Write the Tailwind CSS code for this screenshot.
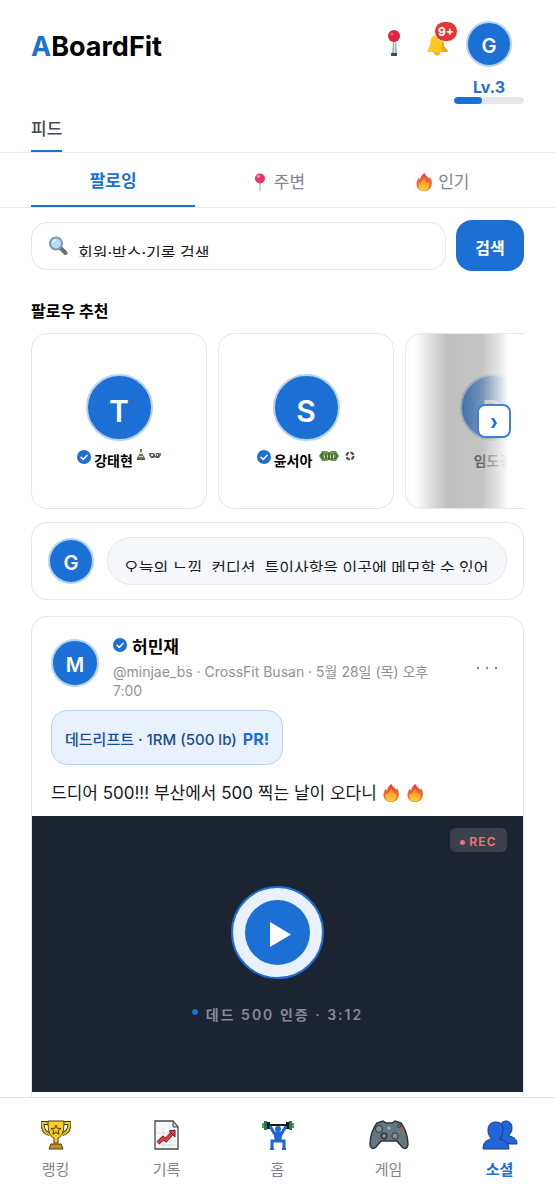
<!DOCTYPE html>
<html lang="ko">

<head>
	<meta charset="UTF-8" />
	<meta name="viewport" content="width=device-width, initial-scale=1.0" />
	<title>ABoardFit</title>
	<script src="https://cdn.jsdelivr.net/npm/@tailwindcss/browser@4"></script>
</head>

<body class="bg-white font-['Inter','Noto_Sans_CJK_KR',sans-serif] text-black">
	<!-- Shared icons -->
	<svg class="absolute size-0" aria-hidden="true">
		<linearGradient id="flame-outer" x1="0" y1="0" x2="0" y2="1">
			<stop offset="0" stop-color="#e8403a" />
			<stop offset="1" stop-color="#fb8c2a" />
		</linearGradient>
		<linearGradient id="flame-inner" x1="0" y1="0" x2="0" y2="1">
			<stop offset="0" stop-color="#fb8a20" />
			<stop offset="1" stop-color="#ffd33c" />
		</linearGradient>
		<symbol id="flame" viewBox="0 0 18 20">
			<path fill="url(#flame-outer)" d="M9.500 1c1 3 4 4 5 6 .3-.6.5-1.200.4-2 1.800 2.500 2.300 5.500 1.800 8-.8 4-3.700 6-7.700 6s-7-2.200-7.500-6c-.4-3 1-5.500 2.500-7.500.1 1 .4 1.800 1 2.500C5.500 5 7 2.500 9.500 1z" />
			<path fill="url(#flame-inner)" d="M10 6c-.3 2.500 1.500 3.500 2.300 5 .5-.4.800-1 .9-1.600 1.300 2.200 1.500 4.600.3 6.600-1 1.700-2.600 2.500-4.500 2.500-2.800 0-5-1.500-5.400-4-.3-1.800.4-3.300 1.200-4.300.2.700.5 1.200 1 1.600C6 9.500 7.500 7.300 10 6z" />
		</symbol>
		<symbol id="verified" viewBox="0 0 14 14">
			<circle cx="7" cy="7" r="7" fill="#1c6fd4" />
			<path d="M4 7.200l2.200 2.200 3.900-4.200" fill="none" stroke="#fff" stroke-width="1.500" stroke-linecap="round" stroke-linejoin="round" />
		</symbol>
	</svg>

	<header class="border-b border-[#e8e9ec] px-[31px]">
		<div class="flex items-start justify-between pt-[21px]">
			<h1 class="pt-1 text-[27px] leading-[44px] font-bold"><span class="text-[#1c6fd4]">A</span>BoardFit</h1>
			<div class="flex items-start">
				<button type="button" aria-label="위치" class="mt-2 mr-6">
					<svg class="h-7 w-4" viewBox="0 0 16 28">
						<path d="M7 12h3l1 13H6z" fill="#9eb2bf" />
						<path d="M8 12h1v13H8z" fill="#dce6ec" />
						<path d="M5 24h6v3H5z" fill="#444b50" />
						<circle cx="8" cy="7" r="6" fill="#dd2443" />
						<circle cx="6" cy="5" r="1.500" fill="#ef5a70" />
					</svg>
				</button>
				<button type="button" aria-label="알림" class="relative mt-3">
					<svg class="h-6 w-6" viewBox="0 0 24 24">
						<path d="M11 1.500c4.500.5 6.500 4 6.500 8.500 0 3.500 1.500 4.500 4 7.500.5.800-.2 1.500-1 1.500h-17c-1 0-2.500-.5-2-1.500C3 14.500 4 12.500 4.500 9 5 4.500 7 2 11 1.500z" fill="#fdca22" />
						<path d="M13 2c3 1.500 4.500 4.500 4.500 8 0 3.500 1.500 4.500 4 7.500.5.800-.2 1.500-1 1.500h-5c1-5 .500-12-2.500-17z" fill="#e5a91b" />
						<path d="M7.500 19h7c-.5 2.500-1.800 3.500-3.500 3.500S8 21.500 7.500 19z" fill="#f2b61f" />
					</svg>
					<span class="absolute -top-3 left-2 flex h-[21px] w-6 items-center justify-center rounded-full border border-white bg-[#e23633] text-xs font-bold text-white">9+</span>
				</button>
				<div class="ml-1 flex w-[70px] flex-col items-center">
					<div class="flex size-[46px] items-center justify-center rounded-full border-2 border-[#b5d2f5] bg-[#1c6fd4] pt-1 text-xl font-semibold text-white">G</div>
					<span class="mt-2 text-base leading-6 font-bold text-[#1c6fd4]">Lv.3</span>
					<div class="-mt-0.5 h-[7px] w-full overflow-hidden rounded-full bg-[#e5e6ea]">
						<div class="h-full rounded-full bg-[#1c6fd4]" style="width: 40%"></div>
					</div>
				</div>
			</div>
		</div>
		<a href="#feed" class="mt-[10px] inline-block border-b-2 border-[#1c6fd4] pt-[3px] pb-[9px] align-top text-[17px] leading-6 font-medium text-[#454955]">피드</a>
	</header>

	<nav class="flex border-b border-[#e8e9ec] px-[31px] text-[17px] leading-6 text-[#81848f]">
		<a href="#following" class="flex h-[54px] flex-1 items-center justify-center border-b-2 border-[#1c6fd4] pt-1 font-bold text-[#1c6fd4]">팔로잉</a>
		<a href="#nearby" class="flex h-[54px] flex-1 items-center justify-center gap-1 pt-1">
			<svg class="h-5 w-5" viewBox="0 0 20 20">
				<path d="M9.500 10h1.200l-.2 9h-.8z" fill="#8fa3af" />
				<circle cx="10" cy="6.500" r="5" fill="#e8336b" />
				<circle cx="8.500" cy="4.500" r="1.600" fill="#f995b4" />
			</svg>
			주변
		</a>
		<a href="#popular" class="flex h-[54px] flex-1 items-center justify-center gap-1 pt-1">
			<svg class="h-5 w-5"><use href="#flame" /></svg>
			인기
		</a>
	</nav>

	<main class="px-[31px] pt-3 pb-20">
		<form class="flex items-center gap-[10px]">
			<label class="flex h-12 flex-1 items-center rounded-2xl border border-[#e5e6ea] pl-4">
				<svg class="h-5 w-5" viewBox="0 0 20 20">
					<path d="M12.500 12l5 5" stroke="#687078" stroke-width="4" stroke-linecap="round" />
					<circle cx="8" cy="7.500" r="6" fill="#b6dcf8" stroke="#8197aa" stroke-width="2" />
					<path d="M5 6.500c.5-1.500 1.500-2.300 3-2.500" fill="none" stroke="#e9f6ff" stroke-width="1.500" />
				</svg>
				<span class="ml-[10px] h-[22px] min-w-0 flex-1 overflow-hidden">
					<input type="text" aria-label="검색어" placeholder="회원·박스·기록 검색" class="block h-9 w-full text-base outline-none placeholder:text-[#17191d]" />
				</span>
			</label>
			<button type="submit" class="h-[51px] w-[68px] rounded-2xl bg-[#1c6fd4] pt-1 text-base font-bold text-white">검색</button>
		</form>

		<section class="mt-7">
			<h2 class="text-base leading-6 font-bold">팔로우 추천</h2>
			<div class="relative mt-[10px]">
				<div class="flex gap-[11px] overflow-hidden">
					<article class="flex size-44 shrink-0 flex-col items-center justify-center gap-2 rounded-2xl border border-[#e5e6ea] pt-1">
						<div class="flex size-[67px] items-center justify-center rounded-full border-2 border-[#b5d2f5] bg-[#1c6fd4] pt-2 text-3xl font-semibold text-white">T</div>
						<div class="flex items-start gap-[3px] text-sm leading-6 font-bold">
							<svg class="mt-px size-[14px]"><use href="#verified" /></svg>
							<span>강태현</span>
							<svg class="ml-px h-3 w-6" viewBox="0 0 24 12">
								<path d="M3 0h2v4l3 5v2H0V9l3-5z" fill="#667760" />
								<path d="M3 3h2v2H3zM2 7h4v1H2z" fill="#ddd0b0" />
								<path d="M0 10h8v1H0z" fill="#4e4a44" />
								<path d="M12 4h4l2 1 2-1h4v2l-2 3h-3l-1-1-1 1h-3l-2-3z" fill="#51645c" />
								<path d="M14 5h2v2h-2zM18 5h1v2h-1zM20 5h1v2h-1z" fill="#e6e1da" />
								<path d="M22 4h2v2h-2z" fill="#d76558" />
							</svg>
						</div>
					</article>
					<article class="flex size-44 shrink-0 flex-col items-center justify-center gap-2 rounded-2xl border border-[#e5e6ea] pt-1">
						<div class="flex size-[67px] items-center justify-center rounded-full border-2 border-[#b5d2f5] bg-[#1c6fd4] pt-2 text-3xl font-semibold text-white">S</div>
						<div class="flex items-start gap-[3px] text-sm leading-6 font-bold">
							<svg class="mt-px size-[14px]"><use href="#verified" /></svg>
							<span>윤서아</span>
							<svg class="ml-1 h-4 w-9" viewBox="0 0 36 16">
								<path d="M3 2h4l3 1 3-1h4l3 5-3 5h-4l-3-1-3 1H3L0 7z" fill="#68964b" />
								<path d="M4 4L2 7l2 3M7 5v5M10 4v7M13 5v5M16 4l2 3-2 3" fill="none" stroke="#29452a" />
								<path d="M5 6h1v3H5zM8 6h1v3H8zM11 6h1v3h-1zM14 6h1v3h-1z" fill="#c3df88" />
								<circle cx="31" cy="7" r="3.500" fill="#f1f1f1" stroke="#4c4f4d" stroke-width="2" stroke-dasharray="4 1.500" />
							</svg>
						</div>
					</article>
					<article class="flex size-44 shrink-0 flex-col items-center justify-center gap-2 rounded-2xl border border-[#e5e6ea] pt-1">
						<div class="flex size-[67px] items-center justify-center rounded-full border-2 border-[#b5d2f5] bg-[#1c6fd4] pt-2 text-3xl font-semibold text-white">D</div>
						<div class="text-sm leading-6 font-bold">임도경</div>
					</article>
				</div>
				<!-- Edge fade over the clipped card -->
				<div class="absolute inset-y-px right-0 w-[110px] bg-[linear-gradient(to_right,rgba(0,0,0,0)_0%,rgba(0,0,0,0.25)_30%,rgba(120,120,120,0.45)_45%,rgba(165,165,165,0.65)_62%,rgba(220,220,220,0.85)_75%,#fff_86%)]"></div>
				<button type="button" aria-label="다음" class="absolute top-[71px] right-[13px] flex size-[34px] items-center justify-center rounded-lg border-2 border-[#3f81d3] bg-white pt-1">
					<svg class="h-[10px] w-2" viewBox="0 0 8 10"><path d="M1 0h3l3 5-3 5H1l3-5z" fill="#1c6fd4" /></svg>
				</button>
			</div>
		</section>

		<section class="mt-[13px] flex items-center gap-[13px] rounded-2xl border border-[#e5e6ea] px-4 py-[14px]">
			<div class="flex size-[46px] shrink-0 items-center justify-center rounded-full border-2 border-[#b5d2f5] bg-[#1c6fd4] pt-1 text-xl font-semibold text-white">G</div>
			<label class="flex h-12 min-w-0 flex-1 items-center rounded-full border border-[#e5e6ea] bg-[#f5f7fb] px-4">
				<span class="h-[22px] w-full overflow-hidden">
					<input type="text" aria-label="메모" placeholder="오늘의 느낌, 컨디션, 특이사항을 이곳에 메모할 수 있어요" class="block h-9 w-full text-base outline-none placeholder:text-[#17191d]" />
				</span>
			</label>
		</section>

		<article class="mt-4 rounded-2xl border border-[#e5e6ea] pb-5">
			<div class="flex gap-[14px] px-[19px] pt-[18px]">
				<div class="mt-1 flex size-12 shrink-0 items-center justify-center rounded-full border-2 border-[#b5d2f5] bg-[#1c6fd4] pt-1 text-xl font-semibold text-white">M</div>
				<div class="min-w-0 flex-1">
					<div class="flex items-start gap-[5px] text-[17px] leading-6 font-bold">
						<svg class="mt-[3px] size-[14px]"><use href="#verified" /></svg>
						허민재
					</div>
					<p class="mt-[3px] text-sm leading-[19px] break-keep text-[#8f9199]">@minjae_bs · CrossFit Busan · 5월 28일 (목) 오후 7:00</p>
				</div>
				<button type="button" aria-label="더보기" class="mt-6 ml-5 h-6 w-8">
					<svg class="h-6 w-8" viewBox="0 0 32 24" fill="#878a94">
						<circle cx="6" cy="9" r="1.200" />
						<circle cx="15" cy="9" r="1.200" />
						<circle cx="24" cy="9" r="1.200" />
					</svg>
				</button>
			</div>
			<div class="px-[19px]">
				<p class="mt-[10px] inline-block rounded-2xl border border-[#b9d4f3] bg-[#e8f1fc] px-[13px] pt-4 pb-3 align-top text-[15px] leading-6 font-medium text-[#174e96]">데드리프트 · 1RM (500 lb) <strong class="ml-0.5 text-base font-bold text-[#1c6fd4]">PR!</strong></p>
				<p class="mt-4 mb-[11px] flex items-center text-[17px] leading-6 text-[#17191d]">
					드디어 500!!! 부산에서 500 찍는 날이 오다니
					<svg class="ml-1 h-5 w-5"><use href="#flame" /></svg>
					<svg class="ml-1 h-5 w-5"><use href="#flame" /></svg>
				</p>
			</div>
			<div class="relative flex h-[276px] flex-col items-center bg-[#1c2431]">
				<span class="absolute top-3 right-4 flex h-6 w-[57px] items-center justify-center gap-1 rounded-md bg-[#3c404b] pt-1 text-xs font-semibold tracking-widest text-[#f87179]"><span class="size-[5px] rounded-full bg-[#f87179]"></span>REC</span>
				<button type="button" aria-label="재생" class="mt-[70px] flex size-[93px] items-center justify-center rounded-full border-2 border-[#1c6fd4] bg-[#e9f1fd]">
					<svg class="size-[65px]" viewBox="0 0 65 65">
						<circle cx="32.500" cy="32.500" r="32.500" fill="#1c6fd4" />
						<path d="M25 22v25l21-12.500z" fill="#fff" />
					</svg>
				</button>
				<p class="mt-6 flex items-start gap-2 text-sm leading-6 font-semibold tracking-[2px] text-[#858b98]"><span class="mt-[6px] size-[6px] rounded-full bg-[#1c6fd4]"></span>데드 500 인증 · 3:12</p>
			</div>
		</article>
	</main>

	<nav class="fixed inset-x-0 bottom-0 grid h-[103px] grid-cols-5 border-t border-[#e0e1e4] bg-white pt-[21px] text-[15px] leading-6 text-[#81848f]">
		<a href="#ranking" class="flex flex-col items-center gap-[7px]">
			<svg class="h-8 w-[30px]" viewBox="0 0 30 32" stroke="#4b3b15" stroke-width="1">
				<path d="M7 4H1.500c0 6 2 10 7 11M23 4h5.500c0 6-2 10-7 11" fill="none" stroke="#4b3b15" stroke-width="4" />
				<path d="M7 4H1.500c0 6 2 10 7 11M23 4h5.500c0 6-2 10-7 11" fill="none" stroke="#f3c62c" stroke-width="2" />
				<path d="M7 2h16c0 9-1 15-6 17v5h-4v-5C8 17 7 11 7 2z" fill="#fbcf21" />
				<path d="M15 6l1.400 3.200 3.600.3-2.700 2.300.9 3.400-3.200-1.800-3.200 1.800.9-3.400L10 9.500l3.600-.3z" fill="#eebd22" />
				<path d="M10 25h10l2 5H8z" fill="#c6901d" />
			</svg>
			랭킹
		</a>
		<a href="#records" class="flex flex-col items-center gap-[7px]">
			<svg class="h-8 w-[30px]" viewBox="0 0 30 32">
				<path d="M3 2h18l5 6v22H3z" fill="#f7f8f9" stroke="#44484b" stroke-width="1.300" />
				<path d="M6 14h18M6 18h18M6 22h18M6 26h18M11 8v20M18 8v20" stroke="#dadee1" />
				<path d="M21 2v6h5z" fill="#c9ced2" stroke="#44484b" />
				<path d="M6 24l5-5 3 2 7-8" fill="none" stroke="#682027" stroke-width="4" />
				<path d="M6 24l5-5 3 2 7-8" fill="none" stroke="#e33a43" stroke-width="2.500" />
				<path d="M17 12l6-1v7z" fill="#e33a43" stroke="#682027" />
			</svg>
			기록
		</a>
		<a href="#home" class="flex flex-col items-center gap-[7px]">
			<svg class="h-8 w-[34px]" viewBox="0 0 34 32">
				<path d="M3 5h28v2H3z" fill="#16191c" />
				<path d="M1 4h2v5H1zM31 4h2v5h-2z" fill="#39ad61" />
				<path d="M3 2h3v9H3zM28 2h3v9h-3z" fill="#257a45" />
				<path d="M6 3h3v7H6zM25 3h3v7h-3z" fill="#16191c" />
				<path d="M9 7l4 7h8l4-7" fill="none" stroke="#2464d2" stroke-width="3" />
				<path d="M12 13h10l-2 9h-6z" fill="#2464d2" />
				<path d="M11 30v-8h12v8" fill="none" stroke="#2464d2" stroke-width="3" />
				<circle cx="17" cy="10" r="3" fill="#2464d2" />
				<path d="M9 30h4M21 30h4" stroke="#2464d2" stroke-width="2" />
			</svg>
			홈
		</a>
		<a href="#game" class="flex flex-col items-center gap-[7px]">
			<svg class="h-8 w-[42px]" viewBox="0 0 42 32" stroke="#2c3438">
				<path d="M9 4l6-2 3 2h6l3-2 6 2c4 5 7 14 7 21 0 4-3 6-6 3l-5-6H13l-5 6c-3 3-6 1-6-3C2 18 5 9 9 4z" fill="#67777f" stroke-width="1.500" />
				<circle cx="11" cy="10" r="3.500" fill="#82929b" />
				<circle cx="16" cy="17" r="3.200" fill="#3f4b51" />
				<path d="M16 15v4M14 17h4" stroke="#9aabb3" />
				<circle cx="27" cy="17" r="3.200" fill="#82929b" />
				<circle cx="31" cy="7" r="1.500" fill="#82929b" />
				<circle cx="28" cy="10" r="1.500" fill="#587a90" stroke="none" />
				<circle cx="34" cy="10" r="1.500" fill="#d9484d" stroke="none" />
				<circle cx="31" cy="13" r="1.500" fill="#5d9175" stroke="none" />
				<circle cx="21" cy="9" r="1.500" fill="#aebbc1" stroke="none" />
			</svg>
			게임
		</a>
		<a href="#social" class="flex flex-col items-center gap-[7px] font-bold text-[#1c6fd4]">
			<svg class="h-8 w-[38px]" viewBox="0 0 38 32" fill="#2464d9" stroke="#173c82">
				<path d="M25 2c4 0 6 3 6 7 0 3-1 5-3 7v1c5 1 8 3 8 8H18V10c1-5 3-8 7-8z" />
				<path d="M15 3c5 0 7 3 7 8 0 4-1 6-3 8v1c5 1 9 4 9 10H2c0-6 3-9 8-10v-1c-2-2-3-4-3-8 0-5 3-8 8-8z" />
			</svg>
			소셜
		</a>
	</nav>
</body>

</html>
